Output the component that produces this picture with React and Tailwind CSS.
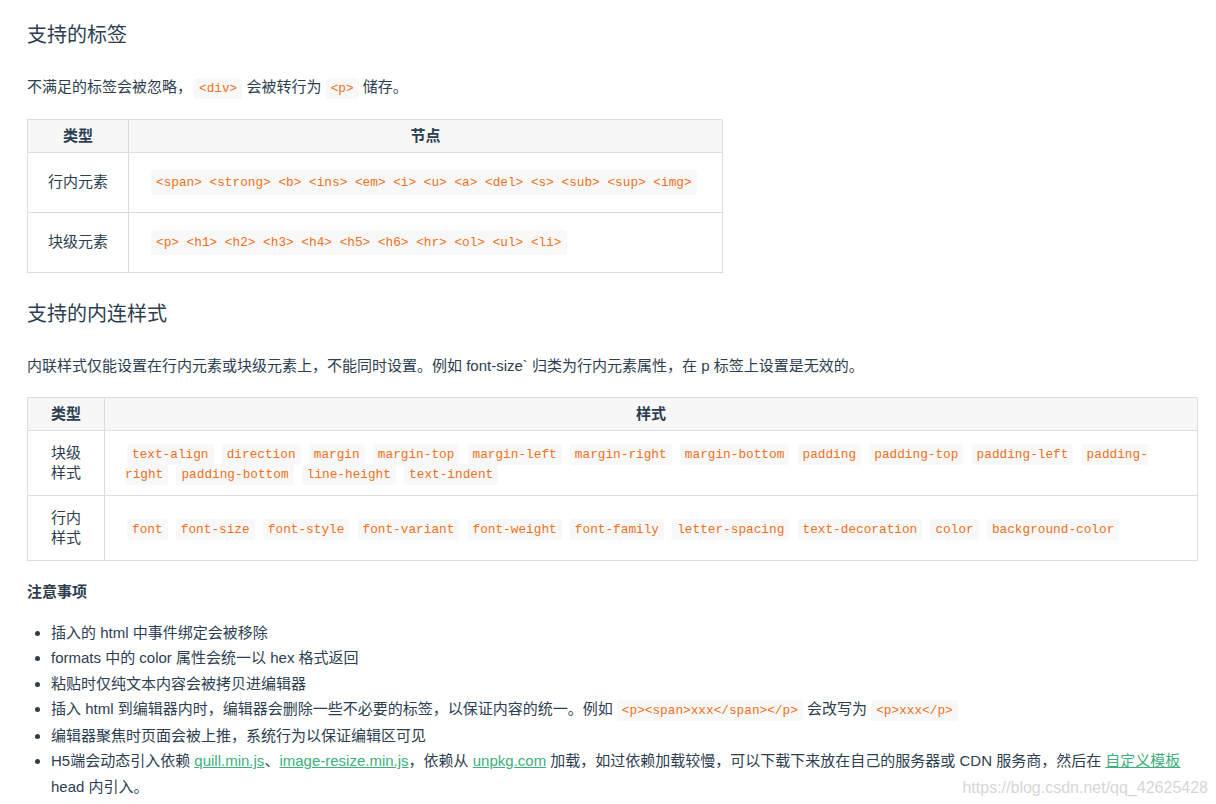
import React from 'react';
import clsx from 'clsx';

const Code = ({ children, className }) => (
  <code
    className={clsx(
      "font-['Liberation_Mono',monospace] text-[12.75px] text-[#ef7020] bg-[#f8f8f8] px-[5px] py-[3px] rounded-[3px]",
      className
    )}
  >
    {children}
  </code>
);

const blockStyles = [
  'text-align', 'direction', 'margin', 'margin-top', 'margin-left', 'margin-right',
  'margin-bottom', 'padding', 'padding-top', 'padding-left', 'padding-right',
  'padding-bottom', 'line-height', 'text-indent'
];

const inlineStyles = [
  'font', 'font-size', 'font-style', 'font-variant', 'font-weight', 'font-family',
  'letter-spacing', 'text-decoration', 'color', 'background-color'
];

const TagList = ({ items }) => (
  <>
    {items.map((item, i) => (
      <React.Fragment key={item}>
        <Code className="mx-[2px]">{item}</Code>
        {i < items.length - 1 ? ' ' : ''}
      </React.Fragment>
    ))}
  </>
);

const Link = ({ children }) => (
  <a href="#" className="text-[#3eaf7c] underline">{children}</a>
);

const App = () => {
  return (
    <div className="relative min-h-[804px] bg-white pl-[27px] pr-[20px] pt-[20px] text-[15px] text-[#2c3e50] font-['Liberation_Sans','Noto_Sans_CJK_SC',sans-serif]">
      <h3 className="h-[30px] text-[20px] leading-[30px] font-normal">支持的标签</h3>
      <p className="mt-[25px] h-[24px] leading-[24px]">
        不满足的标签会被忽略，<Code className="ml-[2px]">&lt;div&gt;</Code> 会被转行为 <Code>&lt;p&gt;</Code> 储存。
      </p>

      {/* 表格 1 */}
      <div className="mt-[20px] w-[695px] grid grid-cols-[101px_594px] border-l border-t border-[#dddddd]">
        <div className="h-[33px] flex items-center justify-center font-bold bg-[#f7f7f7] border-r border-b border-[#dddddd]">类型</div>
        <div className="h-[33px] flex items-center justify-center font-bold bg-[#f7f7f7] border-r border-b border-[#dddddd]">节点</div>
        <div className="h-[60px] flex items-center justify-center border-r border-b border-[#dddddd]">行内元素</div>
        <div className="h-[60px] flex items-center px-[20px] border-r border-b border-[#dddddd]">
          <Code className="mx-[2px]">
            &lt;span&gt; &lt;strong&gt; &lt;b&gt; &lt;ins&gt; &lt;em&gt; &lt;i&gt; &lt;u&gt; &lt;a&gt; &lt;del&gt; &lt;s&gt; &lt;sub&gt; &lt;sup&gt; &lt;img&gt;
          </Code>
        </div>
        <div className="h-[60px] flex items-center justify-center border-r border-b border-[#dddddd]">块级元素</div>
        <div className="h-[60px] flex items-center px-[20px] border-r border-b border-[#dddddd]">
          <Code className="mx-[2px]">
            &lt;p&gt; &lt;h1&gt; &lt;h2&gt; &lt;h3&gt; &lt;h4&gt; &lt;h5&gt; &lt;h6&gt; &lt;hr&gt; &lt;ol&gt; &lt;ul&gt; &lt;li&gt;
          </Code>
        </div>
      </div>

      <h3 className="mt-[26px] h-[30px] text-[20px] leading-[30px] font-normal">支持的内连样式</h3>
      <p className="mt-[25px] h-[24px] leading-[24px]">
        内联样式仅能设置在行内元素或块级元素上，不能同时设置。例如 font-size` 归类为行内元素属性，在 p 标签上设置是无效的。
      </p>

      {/* 表格 2 */}
      <div className="mt-[19px] w-[1170px] grid grid-cols-[77px_1093px] border-l border-t border-[#dddddd]">
        <div className="h-[33px] flex items-center justify-center font-bold bg-[#f7f7f7] border-r border-b border-[#dddddd]">类型</div>
        <div className="h-[33px] flex items-center justify-center font-bold bg-[#f7f7f7] border-r border-b border-[#dddddd]">样式</div>
        <div className="h-[65px] flex flex-col items-center justify-center leading-[20px] border-r border-b border-[#dddddd]">
          <span>块级</span>
          <span>样式</span>
        </div>
        <div className="h-[65px] flex items-center px-[20px] pt-[2px] border-r border-b border-[#dddddd]">
          <div className="leading-[18px]">
            <TagList items={blockStyles} />
          </div>
        </div>
        <div className="h-[65px] flex flex-col items-center justify-center leading-[20px] border-r border-b border-[#dddddd]">
          <span>行内</span>
          <span>样式</span>
        </div>
        <div className="h-[65px] flex items-center px-[20px] pt-[2px] border-r border-b border-[#dddddd]">
          <div className="leading-[18px]">
            <TagList items={inlineStyles} />
          </div>
        </div>
      </div>

      <p className="mt-[19px] h-[24px] leading-[24px] font-bold">注意事项</p>
      <ul className="mt-[16px] list-disc pl-[24px] leading-[25.3px]">
        <li>插入的 html 中事件绑定会被移除</li>
        <li>formats 中的 color 属性会统一以 hex 格式返回</li>
        <li>粘贴时仅纯文本内容会被拷贝进编辑器</li>
        <li>
          插入 html 到编辑器内时，编辑器会删除一些不必要的标签，以保证内容的统一。例如 <Code>&lt;p&gt;&lt;span&gt;xxx&lt;/span&gt;&lt;/p&gt;</Code> 会改写为 <Code>&lt;p&gt;xxx&lt;/p&gt;</Code>
        </li>
        <li>编辑器聚焦时页面会被上推，系统行为以保证编辑区可见</li>
        <li>
          H5端会动态引入依赖 <Link>quill.min.js</Link>、<Link>image-resize.min.js</Link>，依赖从 <Link>unpkg.com</Link> 加载，如过依赖加载较慢，可以下载下来放在自己的服务器或 CDN 服务商，然后在 <Link>自定义模板</Link> head 内引入。
        </li>
      </ul>

      <div className="absolute right-[8px] top-[779px] text-[16px] leading-[18px] text-[#d6d6d6] font-['Liberation_Sans',sans-serif]">
        https://blog.csdn.net/qq_42625428
      </div>
    </div>
  );
};

export default App;
